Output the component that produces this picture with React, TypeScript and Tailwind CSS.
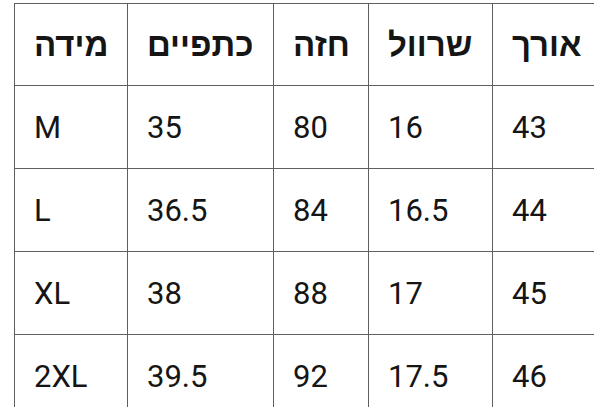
const headers = ['מידה', 'כתפיים', 'חזה', 'שרוול', 'אורך'];

const rows = [
  ['M', '35', '80', '16', '43'],
  ['L', '36.5', '84', '16.5', '44'],
  ['XL', '38', '88', '17', '45'],
  ['2XL', '39.5', '92', '17.5', '46'],
];

const widths = ['w-[113px]', 'w-[146px]', 'w-[95px]', 'w-[124px]', 'w-[101px]'];

export default function App() {
  return (
    <div className="w-[600px] h-[407px] overflow-hidden bg-white pt-[3px] pl-[14px] font-['Roboto','Liberation_Sans','DejaVu_Sans',sans-serif] text-[#151515]">
      <table className="w-[579px] border-collapse table-fixed">
        <thead>
          <tr className="h-[82px]">
            {headers.map((h, i) => (
              <th
                key={i}
                className={`${widths[i]} border border-[#5f5f5f] border-r-0 pl-[19px] pr-0 text-left text-[33px] font-bold leading-none whitespace-nowrap`}
              >
                <span dir="rtl">{h}</span>
              </th>
            ))}
          </tr>
        </thead>
        <tbody>
          {rows.map((r, ri) => (
            <tr key={ri} className="h-[83px]">
              {r.map((c, ci) => (
                <td
                  key={ci}
                  className="border border-[#5f5f5f] border-r-0 pl-[19px] pr-0 text-left text-[31px] leading-none"
                >
                  {c}
                </td>
              ))}
            </tr>
          ))}
        </tbody>
      </table>
    </div>
  );
}
